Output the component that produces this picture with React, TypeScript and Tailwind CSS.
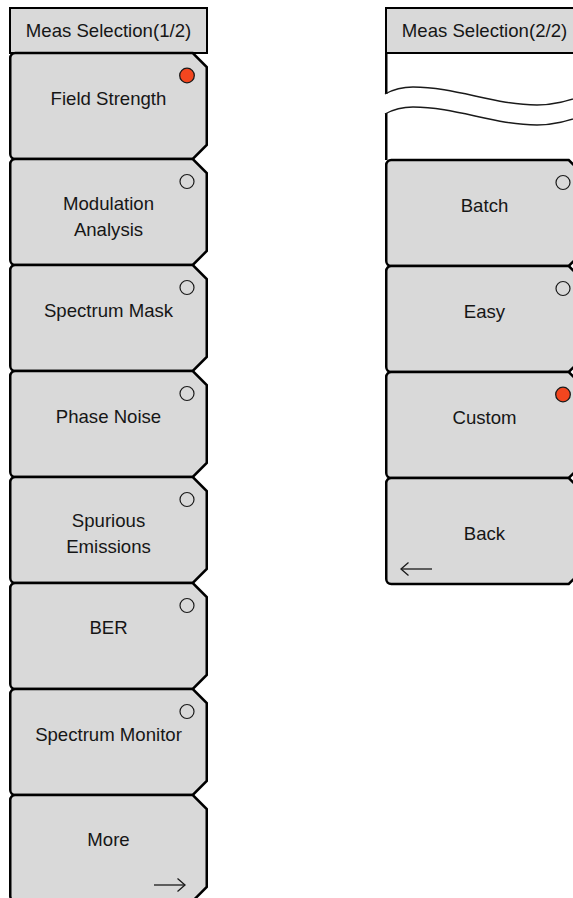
import React from "react";

const W = 199;
const H = 106;
const L = 1.25;
const R = W - 1.25;
const C = 14;
const RAD = 5;

const shapePath = `M ${L} ${RAD} A ${RAD} ${RAD} 0 0 1 ${L + RAD} 0 L ${R - C} 0 L ${R} ${C} L ${R} ${H - C} L ${R - C} ${H} L ${L + RAD} ${H} A ${RAD} ${RAD} 0 0 1 ${L} ${H - RAD} Z`;

type BtnProps = {
  lines: string[];
  radio?: "on" | "off";
  arrow?: "left" | "right";
  pt?: string;
};

function SoftKey({ lines, radio, arrow, pt = "pt-[33px]" }: BtnProps) {
  return (
    <div className="relative h-[106px] w-[199px] shrink-0">
      <svg
        className="absolute inset-0 overflow-visible"
        width={W}
        height={H}
        viewBox={`0 0 ${W} ${H}`}
      >
        <path d={shapePath} fill="#d9d9d9" stroke="#000" strokeWidth={2.5} strokeLinejoin="miter" />
        {radio === "on" && (
          <circle cx={178} cy={22.5} r={7.3} fill="#f3461f" stroke="#1a1a1a" strokeWidth={1.3} />
        )}
        {radio === "off" && (
          <circle cx={178} cy={22.5} r={7} fill="none" stroke="#1a1a1a" strokeWidth={1.2} />
        )}
        {arrow === "right" && (
          <g stroke="#1a1a1a" strokeWidth={1.3} fill="none">
            <line x1={145} y1={90} x2={176} y2={90} />
            <polyline points="168.5,83.5 176,90 168.5,96.5" />
          </g>
        )}
        {arrow === "left" && (
          <g stroke="#1a1a1a" strokeWidth={1.3} fill="none">
            <line x1={16} y1={91} x2={47} y2={91} />
            <polyline points="23.5,84.5 16,91 23.5,97.5" />
          </g>
        )}
      </svg>
      <div
        className={`relative flex flex-col items-center text-center text-[18.6px] leading-[26px] text-[#161616] ${pt}`}
      >
        {lines.map((l) => (
          <div key={l}>{l}</div>
        ))}
      </div>
    </div>
  );
}

function Header({ title }: { title: string }) {
  return (
    <div className="flex h-[47px] w-[199px] shrink-0 items-center justify-center border-[2.5px] border-black bg-[#d9d9d9] pt-[1px] text-[18.6px] leading-[26px] text-[#161616]">
      {title}
    </div>
  );
}

function BreakArea() {
  return (
    <div className="relative h-[107.25px] w-[199px] shrink-0 -mt-[1.25px]">
      <svg className="absolute inset-0 overflow-visible" width={W} height={107} viewBox="0 0 199 107">
        <line x1={1.25} y1={0} x2={1.25} y2={41} stroke="#000" strokeWidth={2.5} />
        <line x1={1.25} y1={60} x2={1.25} y2={107} stroke="#000" strokeWidth={2.5} />
        <path
          d="M 0 41 C 9 36 19 34 28 34 C 70 34 110 52 152 52 C 170 52 185 47 205 41"
          fill="none"
          stroke="#1a1a1a"
          strokeWidth={1.4}
        />
        <path
          d="M 0 61 C 9 56 19 54 28 54 C 70 54 110 72 152 72 C 170 72 185 67 205 61"
          fill="none"
          stroke="#1a1a1a"
          strokeWidth={1.4}
        />
      </svg>
    </div>
  );
}

export default function App() {
  return (
    <div
      className="flex h-[898px] w-[573px] items-start gap-[177px] overflow-hidden bg-white pl-[9px] pt-[7px]"
      style={{ fontFamily: '"Liberation Sans", Arial, sans-serif' }}
    >
      <div className="flex w-[199px] shrink-0 flex-col">
        <Header title="Meas Selection(1/2)" />
        <div className="-mt-[1.25px] flex flex-col">
          <SoftKey lines={["Field Strength"]} radio="on" />
          <SoftKey lines={["Modulation", "Analysis"]} radio="off" pt="pt-[32px]" />
          <SoftKey lines={["Spectrum Mask"]} radio="off" />
          <SoftKey lines={["Phase Noise"]} radio="off" />
          <SoftKey lines={["Spurious", "Emissions"]} radio="off" pt="pt-[31px]" />
          <SoftKey lines={["BER"]} radio="off" pt="pt-[32px]" />
          <SoftKey lines={["Spectrum Monitor"]} radio="off" />
          <SoftKey lines={["More"]} arrow="right" pt="pt-[32px]" />
        </div>
      </div>
      <div className="flex w-[199px] shrink-0 flex-col">
        <Header title="Meas Selection(2/2)" />
        <BreakArea />
        <div className="flex flex-col">
          <SoftKey lines={["Batch"]} radio="off" />
          <SoftKey lines={["Easy"]} radio="off" />
          <SoftKey lines={["Custom"]} radio="on" />
          <SoftKey lines={["Back"]} arrow="left" pt="pt-[43px]" />
        </div>
      </div>
    </div>
  );
}
